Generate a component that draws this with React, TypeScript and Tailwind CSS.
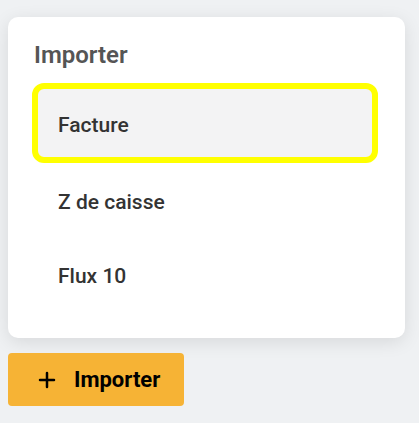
import { Plus } from "lucide-react";

const items = ["Facture", "Z de caisse", "Flux 10"];

export default function App() {
  return (
    <div
      className="flex h-[423px] w-[419px] flex-col items-start bg-[#eff1f3] px-2 pt-[17px]"
      style={{ fontFamily: "Roboto, 'Noto Sans', sans-serif" }}
    >
      {/* Import menu card */}
      <div className="flex w-[397px] flex-col rounded-[10px] bg-white pb-[27px] pl-6 pr-[27px] pt-[24px] shadow-[0_4px_18px_rgba(0,0,0,0.10)]">
        <h2 className="pl-0.5 text-[24px] font-semibold leading-[28px] text-[#555555]">
          Importer
        </h2>
        <ul className="mt-[14px] flex flex-col">
          {items.map((label, i) =>
            i === 0 ? (
              <li
                key={label}
                className="flex h-[80px] items-center rounded-[12px] border-[6px] border-[#ffff00] bg-[#f3f3f4] pl-5 pt-1.5 text-[21px] font-medium text-[#333333]"
              >
                {label}
              </li>
            ) : (
              <li
                key={label}
                className="flex h-[74px] items-center pl-[26px] pt-1.5 text-[21px] font-medium text-[#333333]"
              >
                {label}
              </li>
            )
          )}
        </ul>
      </div>

      {/* Import button */}
      <button
        type="button"
        className="mt-[15px] flex h-[53px] w-[176px] items-center gap-[15px] rounded-[4px] bg-[#f6b335] pl-[27px] text-[22px] font-bold text-black"
      >
        <Plus className="h-6 w-6" strokeWidth={2.5} />
        Importer
      </button>
    </div>
  );
}
